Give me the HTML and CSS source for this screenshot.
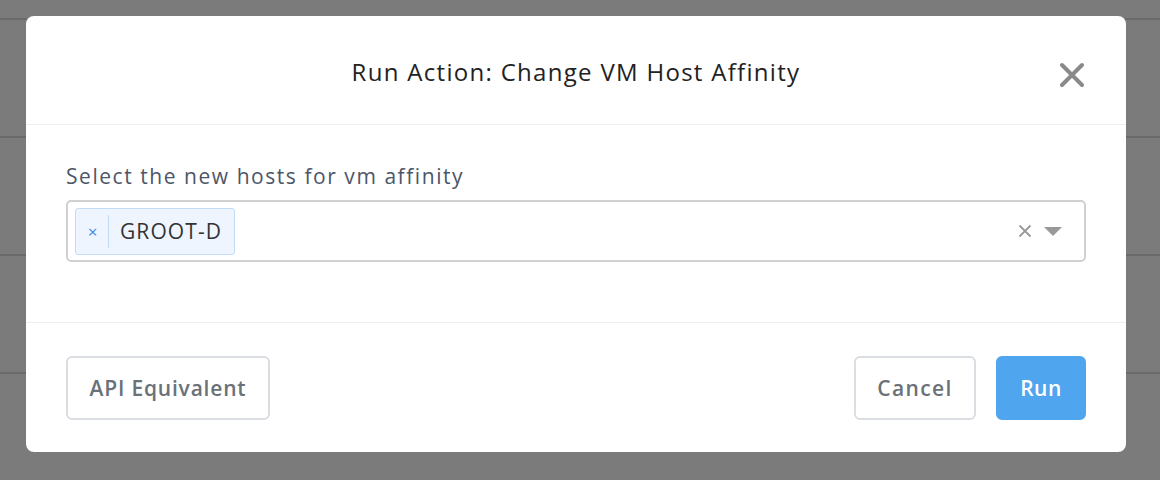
FILE: index.html
```html
<!DOCTYPE html>
<html>
<head>
<meta charset="utf-8">
<link rel="stylesheet" href="styles.css">
</head>
<body>
<div class="modal">
  <div class="modal-header">
    <h1 class="title">Run Action: Change VM Host Affinity</h1>
    <button class="close" aria-label="Close">
      <svg width="26" height="26" viewBox="0 0 26 26"><path d="M3 3 L23 23 M23 3 L3 23" stroke="#8a8a8a" stroke-width="4" stroke-linecap="round"/></svg>
    </button>
  </div>
  <div class="modal-body">
    <label class="label">Select the new hosts for vm affinity</label>
    <div class="select">
      <div class="values">
        <span class="tag">
          <span class="tag-remove">×</span>
          <span class="tag-label">GROOT-D</span>
        </span>
      </div>
      <div class="indicators">
        <svg class="clear" width="14" height="14" viewBox="0 0 14 14"><path d="M1.5 1.5 L12.5 12.5 M12.5 1.5 L1.5 12.5" stroke="#999" stroke-width="1.8"/></svg>
        <svg class="caret" width="18" height="10" viewBox="0 0 18 10"><path d="M0 0 H18 L9 9 Z" fill="#999"/></svg>
      </div>
    </div>
  </div>
  <div class="modal-footer">
    <button class="btn btn-api">API Equivalent</button>
    <div class="right">
      <button class="btn btn-cancel">Cancel</button>
      <button class="btn btn-primary">Run</button>
    </div>
  </div>
</div>
</body>
</html>
```
FILE: styles.css
```css
html, body {
  margin: 0;
  padding: 0;
}
body {
  width: 1160px;
  height: 480px;
  overflow: hidden;
  background-color: #7b7b7b;
  background-image: repeating-linear-gradient(to bottom,
    transparent 0px, transparent 18px,
    #6a6a6a 18px, #6a6a6a 20px,
    transparent 20px, transparent 118px);
  font-family: "Open Sans", "Liberation Sans", sans-serif;
  padding: 16px 34px 0 26px;
  box-sizing: border-box;
}
.modal {
  width: 1100px;
  height: 436px;
  background: #fff;
  border-radius: 8px;
  display: flex;
  flex-direction: column;
  overflow: hidden;
}
.modal-header {
  height: 108px;
  border-bottom: 1px solid #efefef;
  display: flex;
  align-items: center;
  justify-content: center;
  position: relative;
}
.title {
  margin: 0;
  font-size: 24px;
  font-weight: 400;
  color: #222;
  letter-spacing: 1.3px;
  padding-top: 2px;
}
.close {
  position: absolute;
  right: 41px;
  top: 46px;
  background: none;
  border: 0;
  padding: 0;
  width: 26px;
  height: 26px;
  display: flex;
}
.modal-body {
  height: 198px;
  border-bottom: 1px solid #efefef;
  padding: 39px 40px 0 40px;
  box-sizing: border-box;
  display: flex;
  flex-direction: column;
}
.label {
  font-size: 21px;
  line-height: 24px;
  color: #4c5668;
  letter-spacing: 1.55px;
  margin-bottom: 12px;
}
.select {
  height: 62px;
  border: 2px solid #d0d0d0;
  border-radius: 5px;
  box-sizing: border-box;
  display: flex;
  align-items: center;
  padding: 0 22px 0 7px;
}
.values {
  flex: 1;
  display: flex;
}
.tag {
  display: flex;
  align-items: stretch;
  height: 47px;
  box-sizing: border-box;
  background: #eef5ff;
  border: 1px solid #c2dcf6;
  border-radius: 3px;
}
.tag-remove {
  color: #3a8bea;
  font-size: 17px;
  width: 33px;
  display: flex;
  align-items: center;
  justify-content: center;
  position: relative;
  padding-top: 1px;
}
.tag-remove::after {
  content: "";
  position: absolute;
  right: 0;
  top: 6px;
  bottom: 6px;
  width: 1px;
  background: #c2dcf6;
}
.tag-label {
  display: flex;
  align-items: center;
  padding: 0 12px 0 11px;
  font-size: 21px;
  color: #333;
  letter-spacing: 1.1px;
}
.indicators {
  display: flex;
  align-items: center;
  gap: 12px;
}
.caret {
  margin-top: 2px;
}
.modal-footer {
  flex: 1;
  display: flex;
  align-items: center;
  justify-content: space-between;
  padding: 0 40px;
}
.right {
  display: flex;
  gap: 20px;
}
.btn {
  height: 64px;
  border: 2px solid #dadde1;
  border-radius: 6px;
  background: #fff;
  font-family: "Open Sans", "Liberation Sans", sans-serif;
  font-size: 21px;
  font-weight: 600;
  color: #6b7178;
  letter-spacing: 0.8px;
  padding: 0;
  box-sizing: border-box;
}
.btn-api {
  width: 204px;
}
.btn-cancel {
  width: 122px;
  letter-spacing: 1.4px;
}
.btn-primary {
  width: 90px;
  background: #4fa5ee;
  border-color: #4fa5ee;
  color: #fff;
  letter-spacing: 0.5px;
}
```
